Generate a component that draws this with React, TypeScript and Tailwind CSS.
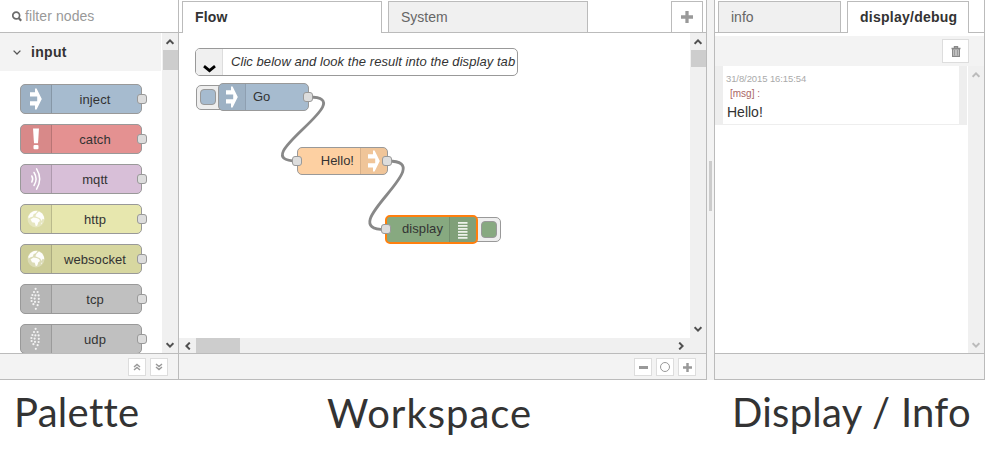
import React from "react";

const FONT = "font-['Liberation_Sans',Arial,sans-serif]";

function ArrowIcon() {
  return (
    <svg width="14" height="24" viewBox="0 0 14 24" fill="#fff">
      <path d="M1 5.2H6V1.5H7.600L12.800 12L7.600 22.500H6V18.400H1V14.300H8.200V9.400H1Z" />
    </svg>
  );
}

function AlertIcon() {
  return (
    <svg width="14" height="24" viewBox="0 0 14 24" fill="#fff">
      <path d="M4 1.5H10L9 16.200H5Z" />
      <rect x="4.500" y="18" width="5" height="4.200" rx="1" />
    </svg>
  );
}

function WavesIcon() {
  return (
    <svg width="14" height="24" viewBox="0 0 14 24" fill="none" stroke="#fff" strokeLinecap="round">
      <path d="M2.800 9Q4.600 12 2.800 15" strokeWidth="1.500" />
      <path d="M5 5.500Q9.200 12 5 18.500" strokeWidth="1.500" />
      <path d="M7.600 1.800Q13.800 12 7.600 22.200" strokeWidth="1.500" />
    </svg>
  );
}

function GlobeIcon() {
  return (
    <svg width="18" height="18" viewBox="0 0 18 18">
      <circle cx="9" cy="9" r="8.500" fill="#fff" fillOpacity="0.3" />
      <g fill="#fff" fillOpacity="0.95">
        <path d="M1.300 6.500L3.500 3L7 1L10.500 0.800L9 3L6.500 4.200L6 6.500L3.500 7.300L1.500 8.500Z" />
        <path d="M3.600 9.300L6.500 7.600L9.500 8L12 9L13 11L11.300 12.300L10.300 15.500L8.800 16.200L7.800 12.800L5 12.300Z" />
        <path d="M9.500 3.800L12 1.500L15.200 3.600L17 7L17.200 9.500L15.500 8.800L14.800 11L13 8.200L10 7L8.300 6.200Z" />
        <path d="M13.800 13.200L15.300 12.200L14.800 14Z" />
      </g>
    </svg>
  );
}

function DotsIcon() {
  const dots = [
    [6.6, 1.8], [5, 5], [8.6, 5], [3.4, 8], [6.4, 8.4], [9.6, 8.4], [2.4, 11], [5.6, 11.6],
    [9.8, 11.8], [2.6, 14], [6, 14.8], [9.6, 15], [4.4, 17.2], [8.6, 18.2], [6.8, 21.8],
  ];
  return (
    <svg width="14" height="24" viewBox="0 0 14 24" fill="#fff">
      {dots.map(([x, y], i) => (
        <circle key={i} cx={x} cy={y} r="1.1" fillOpacity="0.85" />
      ))}
    </svg>
  );
}

function Chevron({ className = "", color = "#505050" }: { className?: string; color?: string }) {
  return (
    <svg className={className} width="8" height="6" viewBox="0 0 8 6" fill="none" stroke={color} strokeWidth="2">
      <path d="M0.6 4.8L4 1.4L7.4 4.8" />
    </svg>
  );
}

function DoubleChevron({ down = false }: { down?: boolean }) {
  return (
    <svg className={down ? "rotate-180" : ""} width="8" height="8" viewBox="0 0 8 8" fill="none" stroke="#999" strokeWidth="1.4">
      <path d="M1 4L4 1.400L7 4M1 7L4 4.400L7 7" />
    </svg>
  );
}

function Plus({ size, color }: { size: number; color: string }) {
  return (
    <svg width={size} height={size} viewBox="0 0 11 11" fill={color}>
      <path d="M4 0H7V4H11V7H7V11H4V7H0V4H4Z" />
    </svg>
  );
}

function Port({ className }: { className: string }) {
  return <span className={`absolute size-[10px] rounded-[3px] border border-[#999] bg-[#ddd] ${className}`} />;
}

function FooterButton({ children }: { children: React.ReactNode }) {
  return <div className="flex size-[18px] items-center justify-center border border-[#ddd] bg-white">{children}</div>;
}

const paletteNodes = [
  { label: "inject", bg: "bg-[#a6bbcf]", icon: <ArrowIcon /> },
  { label: "catch", bg: "bg-[#e49191]", icon: <AlertIcon /> },
  { label: "mqtt", bg: "bg-[#d8bfd8]", icon: <WavesIcon /> },
  { label: "http", bg: "bg-[#e7e7ae]", icon: <GlobeIcon /> },
  { label: "websocket", bg: "bg-[#d7d7a0]", icon: <GlobeIcon /> },
  { label: "tcp", bg: "bg-[#c0c0c0]", icon: <DotsIcon /> },
  { label: "udp", bg: "bg-[#c0c0c0]", icon: <DotsIcon /> },
];

function Palette() {
  return (
    <section className="flex w-[179px] flex-col border-r border-[#bbb]">
      <div className="flex h-[33px] items-center border-b border-[#bbb] pl-3">
        <svg width="10" height="11" viewBox="0 0 10 11" fill="none" stroke="#6b6b6b">
          <circle cx="4.2" cy="4.500" r="3.400" strokeWidth="1.700" />
          <path d="M6.600 7L9.200 9.800" strokeWidth="2.200" />
        </svg>
        <span className="ml-[3px] text-[14px] leading-none tracking-[0.080px] text-[#999]">filter nodes</span>
      </div>
      <div className="flex h-80 overflow-hidden">
        <div className="w-[162px]">
          <div className="mr-px flex h-[38px] items-center bg-[#f3f3f3] pl-[13px]">
            <svg width="8" height="5" viewBox="0 0 8 5" fill="none" stroke="#555" strokeWidth="1.3">
              <path d="M0.6 0.6L4 4L7.4 0.6" />
            </svg>
            <span className="ml-[10px] text-[14px] font-bold tracking-[0.3px] text-[#333]">input</span>
          </div>
          <div className="flex flex-col gap-[10px] pt-[13px] pl-5">
            {paletteNodes.map((n) => (
              <div key={n.label} className={`relative flex h-[30px] w-[122px] shrink-0 rounded-[5px] border border-[#999] ${n.bg}`}>
                <div className="flex w-[31px] items-center justify-center rounded-l-[4px] border-r border-black/15 bg-black/5">{n.icon}</div>
                <div className="flex flex-1 items-center justify-center pt-px pr-[3px] text-[13px] leading-4 tracking-[0.080px] text-[#333]">{n.label}</div>
                <Port className="top-[9px] left-[116px]" />
              </div>
            ))}
          </div>
        </div>
        <div className="flex w-4 flex-col items-center justify-between bg-[#f0f0f0]">
          <div className="flex w-full flex-col items-center">
            <div className="flex h-[17px] items-center"><Chevron /></div>
            <div className="h-5 w-[15px] bg-[#cdcdcd]" />
          </div>
          <div className="flex h-4 items-center"><Chevron className="rotate-180" /></div>
        </div>
      </div>
      <div className="flex h-[27px] justify-end gap-1 border-y border-[#bbb] bg-[#f3f3f3] pt-1 pr-[10px]">
        <FooterButton><DoubleChevron /></FooterButton>
        <FooterButton><DoubleChevron down /></FooterButton>
      </div>
    </section>
  );
}

function Canvas() {
  return (
    <div className="relative h-[305px] w-[511px] bg-white text-[#333]">
      <svg className="absolute inset-0" width="511" height="305" fill="none" stroke="#888" strokeWidth="2.800">
        <path d="M130 64C185 64 63 128 118 128" />
        <path d="M209 128C263 128 152 196.500 206 196.500" />
      </svg>

      <div className="absolute top-[15px] left-[16px] flex h-7 w-[323px] overflow-hidden rounded-[5px] border border-[#999]">
        <div className="flex w-[27px] shrink-0 items-end justify-center border-r border-[#ddd] bg-[#f0f0f0] pb-[2px]">
          <svg width="13" height="8" viewBox="0 0 13 8" fill="none" stroke="#000" strokeWidth="2.800">
            <path d="M1 1.200L6.500 5.600L12 1.200" />
          </svg>
        </div>
        <span className="pl-2 text-[13px] leading-[25px] tracking-[0.060px] whitespace-nowrap italic">Clic below and look the result into the display tab</span>
      </div>

      <div className="absolute top-[52px] left-[17px] h-[25px] w-8 rounded-[5px] border border-[#999] bg-[#eee]">
        <div className="mt-[3px] ml-[3px] size-4 rounded-[4px] border border-[#999] bg-[#a6bbcf]" />
      </div>
      <div className="absolute top-[50px] left-[39px] flex h-7 w-[91px] rounded-[5px] border border-[#999] bg-[#a6bbcf]">
        <div className="flex w-[27px] items-center justify-center rounded-l-[4px] border-r border-black/10 bg-black/5"><ArrowIcon /></div>
        <span className="pl-[7px] text-[13px] leading-[26px]">Go</span>
        <Port className="top-[8px] left-[84px]" />
      </div>

      <div className="absolute top-[114px] left-[118px] flex h-7 w-[91px] justify-end rounded-[5px] border border-[#999] bg-[#fdd0a2]">
        <span className="pr-[6px] text-[13px] leading-[26px]">Hello!</span>
        <div className="flex w-[27px] items-center justify-center rounded-r-[4px] border-l border-black/10 bg-black/5"><ArrowIcon /></div>
        <Port className="top-[8px] -left-[6px]" />
        <Port className="top-[8px] left-[84px]" />
      </div>

      <div className="absolute top-[184px] left-[290px] h-[25px] w-8 rounded-[5px] border border-[#999] bg-[#eee]">
        <div className="mt-[3px] ml-[11px] h-[17px] w-4 rounded-[4px] border border-[#999] bg-[#87a980]" />
      </div>
      <div className="absolute top-[182px] left-[206px] flex h-[29px] w-[93px] justify-end rounded-[5px] border-2 border-[#ff7f0e] bg-[#87a980]">
        <span className="pr-[6px] text-[13px] leading-[24px] tracking-[0.080px]">display</span>
        <div className="flex w-[27px] items-center justify-center rounded-r-[3px] border-l border-black/10 bg-black/5">
          <svg width="10" height="18" viewBox="0 0 10 18" fill="#fff" fillOpacity="0.85">
            <path d="M0 1h9.500v1.700H0zM0 4h9.500v1.700H0zM0 7h9.500v1.700H0zM0 10h9.500v1.700H0zM0 13h9.500v1.700H0zM0 16h9.500v1.700H0z" />
          </svg>
        </div>
        <Port className="top-[7px] -left-[6px]" />
      </div>
    </div>
  );
}

function Workspace() {
  return (
    <section className="flex w-[528px] flex-col border-r border-[#bbb]">
      <div className="flex h-[33px] pt-px text-[14px]">
        <div className="w-[3px] border-b border-[#bbb]" />
        <div className="w-[200px] border-x border-t border-[#bbb] pl-3 leading-[30px] font-bold tracking-[0.200px] text-[#333]">Flow</div>
        <div className="w-[6px] border-b border-[#bbb]" />
        <div className="w-[200px] border border-[#bbb] bg-[#f0f0f0] pl-3 leading-[30px] text-[#666]">System</div>
        <div className="w-[83px] border-b border-[#bbb]" />
        <div className="flex w-8 items-center justify-center border border-[#bbb]"><Plus size={12} color="#999" /></div>
        <div className="flex-1 border-b border-[#bbb]" />
      </div>
      <div className="flex h-[305px]">
        <Canvas />
        <div className="flex flex-1 flex-col items-center justify-between bg-[#f0f0f0]">
          <div className="flex w-full flex-col items-center">
            <div className="flex h-[17px] items-center"><Chevron /></div>
            <div className="h-[17px] w-[15px] bg-[#cdcdcd]" />
          </div>
          <div className="flex h-[18px] items-center"><Chevron className="rotate-180" /></div>
        </div>
      </div>
      <div className="flex h-[15px] items-center bg-[#f0f0f0]">
        <div className="flex w-[17px] justify-center"><Chevron className="-rotate-90" /></div>
        <div className="h-full w-11 bg-[#cdcdcd]" />
        <div className="flex-1" />
        <div className="mr-[21px]"><Chevron className="rotate-90" /></div>
      </div>
      <div className="flex h-[27px] justify-end gap-1 border-y border-[#bbb] bg-[#f3f3f3] pt-1 pr-[10px]">
        <FooterButton><span className="h-[3px] w-[9px] bg-[#999]" /></FooterButton>
        <FooterButton><span className="size-[10px] rounded-full border-[1.5px] border-[#999]" /></FooterButton>
        <FooterButton><Plus size={9} color="#999" /></FooterButton>
      </div>
    </section>
  );
}

function Sidebar() {
  return (
    <section className="flex w-[271px] flex-col border-x border-[#bbb]">
      <div className="flex h-[33px] pt-px text-[14px]">
        <div className="w-[3px] border-b border-[#bbb]" />
        <div className="w-[123px] border border-[#bbb] bg-[#f0f0f0] pl-3 leading-[30px] text-[#666]">info</div>
        <div className="w-[6px] border-b border-[#bbb]" />
        <div className="w-[122px] border-x border-t border-[#bbb] pl-3 leading-[30px] font-bold tracking-[0.250px] text-[#333]">display/debug</div>
        <div className="flex-1 border-b border-[#bbb]" />
      </div>
      <div className="mt-[3px] flex h-[30px] justify-end bg-[#f3f3f3] pt-[3px] pr-[15px]">
        <div className="flex h-6 w-[27px] items-center justify-center border border-[#ddd] bg-white">
          <svg width="10" height="11" viewBox="0 0 10 11" fill="none" stroke="#888">
            <path d="M0.500 2.500H9.500M3.500 2V0.700H6.500V2" strokeWidth="1.400" />
            <path d="M1.600 3V10.300H8.400V3Z" fill="#ccc" strokeWidth="1.200" />
            <path d="M3.700 4V9.500M6.300 4V9.500" strokeWidth="0.900" />
          </svg>
        </div>
      </div>
      <div className="flex h-[287px]">
        <div className="w-[253px]">
          <div className="h-[59px] w-[252px] border-x-8 border-b border-[#eee] pl-[3px]">
            <div className="pt-[7px] text-[9.5px] leading-3 tracking-[-0.100px] text-[#aaa]">31/8/2015 16:15:54</div>
            <div className="pt-[3px] pl-1 text-[10px] leading-3 text-[#a66]">[msg] :</div>
            <div className="pt-[3px] pl-px text-[14px] leading-[18px] text-[#333]">Hello!</div>
          </div>
        </div>
        <div className="flex w-4 flex-col items-center justify-between bg-[#f0f0f0]">
          <div className="flex h-[18px] items-center"><Chevron color="#bbb" /></div>
          <div className="flex h-4 items-center"><Chevron className="rotate-180" color="#bbb" /></div>
        </div>
      </div>
      <div className="h-[27px] border-y border-[#bbb] bg-[#f3f3f3]" />
    </section>
  );
}

export default function App() {
  return (
    <main className={`h-[452px] w-[985px] overflow-hidden bg-white ${FONT}`}>
      <div className="flex h-[380px]">
        <Palette />
        <Workspace />
        <div className="flex w-[7px] justify-center bg-[#f3f3f3] pt-[161px]">
          <div className="h-[50px] w-[3px] bg-[#ccc]" />
        </div>
        <Sidebar />
      </div>
      <div className="flex h-[72px] font-['Lato',sans-serif] text-[40px] leading-[64px] whitespace-nowrap text-[#333] [font-variant-ligatures:none]">
        <div className="w-[313px] pl-[14px] tracking-[0.300px]">Palette</div>
        <div className="w-[419px] pt-px pl-[14px] tracking-[1px]">Workspace</div>
        <div className="tracking-[0.250px]">Display / Info</div>
      </div>
    </main>
  );
}
